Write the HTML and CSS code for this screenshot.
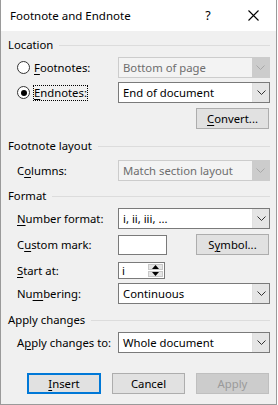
FILE: index.html
```html
<!DOCTYPE html>
<html>
<head>
<meta charset="utf-8">
<link rel="stylesheet" href="styles.css">
</head>
<body>
<div class="dialog">
  <div class="titlebar">
    <span class="title">Footnote and Endnote</span>
    <span class="help">?</span>
    <span class="close"><svg width="11" height="11" viewBox="0 0 11 11"><path d="M0.5 0.5 L10.5 10.5 M10.5 0.5 L0.5 10.5" stroke="#000" stroke-width="1.1" fill="none"/></svg></span>
  </div>
  <div class="body">
    <div class="head h-loc"><span>Location</span><div class="rule"></div></div>

    <div class="row r-foot">
      <div class="lab radio-lab"><span class="radio"></span><span><u>F</u>ootnotes:</span></div>
      <div class="select disabled"><span class="val">Bottom of page</span><span class="drop"><svg width="9" height="5" viewBox="0 0 9 5"><path d="M0.5 0.5 L4.5 4.5 L8.5 0.5" stroke="#a8a8a8" fill="none"/></svg></span></div>
    </div>
    <div class="row r-end">
      <div class="lab radio-lab"><span class="radio checked"></span><span class="focus"><u>E</u>ndnotes:</span></div>
      <div class="select"><span class="val">End of document</span><span class="drop"><svg width="9" height="5" viewBox="0 0 9 5"><path d="M0.5 0.5 L4.5 4.5 L8.5 0.5" stroke="#333" fill="none"/></svg></span></div>
    </div>
    <div class="row r-conv">
      <button class="btn"><u>C</u>onvert...</button>
    </div>

    <div class="head h-lay"><span>Footnote layout</span><div class="rule"></div></div>
    <div class="row r-cols">
      <div class="lab">C<u>o</u>lumns:</div>
      <div class="select disabled"><span class="val">Match section layout</span><span class="drop"><svg width="9" height="5" viewBox="0 0 9 5"><path d="M0.5 0.5 L4.5 4.5 L8.5 0.5" stroke="#a8a8a8" fill="none"/></svg></span></div>
    </div>

    <div class="head h-fmt"><span>Format</span><div class="rule"></div></div>
    <div class="row r-num">
      <div class="lab"><u>N</u>umber format:</div>
      <div class="select"><span class="val">i, ii, iii, ...</span><span class="drop"><svg width="9" height="5" viewBox="0 0 9 5"><path d="M0.5 0.5 L4.5 4.5 L8.5 0.5" stroke="#333" fill="none"/></svg></span></div>
    </div>
    <div class="row r-mark">
      <div class="lab">C<u>u</u>stom mark:</div>
      <div class="input"></div>
      <button class="btn sym">S<u>y</u>mbol...</button>
    </div>
    <div class="row r-start">
      <div class="lab"><u>S</u>tart at:</div>
      <div class="spin"><span class="val">i</span>
        <div class="spinbtns">
          <span class="sb"><svg width="7" height="4" viewBox="0 0 7 4"><path d="M0 4 L3.5 0 L7 4 Z" fill="#000"/></svg></span>
          <span class="sb"><svg width="7" height="4" viewBox="0 0 7 4"><path d="M0 0 L3.5 4 L7 0 Z" fill="#000"/></svg></span>
        </div>
      </div>
    </div>
    <div class="row r-numb">
      <div class="lab">Nu<u>m</u>bering:</div>
      <div class="select"><span class="val">Continuous</span><span class="drop"><svg width="9" height="5" viewBox="0 0 9 5"><path d="M0.5 0.5 L4.5 4.5 L8.5 0.5" stroke="#333" fill="none"/></svg></span></div>
    </div>

    <div class="head h-app"><span>Apply changes</span><div class="rule"></div></div>
    <div class="row r-app">
      <div class="lab">A<u>p</u>ply changes to:</div>
      <div class="select"><span class="val">Whole document</span><span class="drop"><svg width="9" height="5" viewBox="0 0 9 5"><path d="M0.5 0.5 L4.5 4.5 L8.5 0.5" stroke="#333" fill="none"/></svg></span></div>
    </div>

    <div class="buttons">
      <button class="btn default"><u>I</u>nsert</button>
      <button class="btn">Cancel</button>
      <button class="btn off">Apply</button>
    </div>
  </div>
</div>
</body>
</html>
```

FILE: styles.css
```css
* { box-sizing: border-box; }
html, body { margin: 0; padding: 0; background: #fff; }
body {
  font-family: "Segoe UI", "Noto Sans", "Open Sans", sans-serif;
  font-size: 11.3px;
  color: #000;
  width: 278px;
  height: 405px;
  overflow: hidden;
}
u { text-decoration: underline; text-underline-offset: 2px; text-decoration-thickness: 1px; }
.dialog {
  width: 277px;
  height: 405px;
  border: 1px solid #9a9a9a;
  border-top: none;
  background: #f0f0f0;
  display: flex;
  flex-direction: column;
}
.titlebar {
  height: 31px;
  background: #fff;
  display: flex;
  align-items: center;
  padding-left: 9px;
  flex: none;
}
.title { flex: 1; font-size: 11.5px; }
.help { width: 14px; font-size: 12.5px; margin-right: 33px; text-align: center; }
.close { width: 11px; height: 11px; margin-right: 17px; display: flex; }
.body {
  flex: 1;
  padding: 0 6px 0 7px;
  display: flex;
  flex-direction: column;
}
.head {
  height: 14px;
  display: flex;
  align-items: center;
  flex: none;
}
.head span { line-height: 14px; }
.head .rule { flex: 1; height: 1px; background: #dcdcdc; margin-left: 6px; margin-right: 0; }
.h-loc { margin-top: 7px; }
.h-lay { margin-top: 10px; }
.h-fmt { margin-top: 8px; }
.h-app { margin-top: 9px; }

.row {
  display: flex;
  align-items: center;
  padding-left: 9px;
  flex: none;
}
.lab { width: 101px; flex: none; white-space: nowrap; }
.radio-lab { display: flex; align-items: center; }
.radio {
  width: 13px; height: 13px;
  border: 1px solid #333;
  border-radius: 50%;
  background: #fff;
  margin-right: 4px;
  position: relative;
  flex: none;
}
.radio.checked::after {
  content: "";
  position: absolute;
  left: 2.5px; top: 2.5px;
  width: 6px; height: 6px;
  border-radius: 50%;
  background: #000;
}
.focus { outline: 1px dotted #000; outline-offset: 0; line-height: 14px; }

.select {
  width: 152px;
  height: 21px;
  border: 1px solid #7a7a7a;
  background: #fff;
  display: flex;
  align-items: stretch;
  flex: none;
}
.select .val { flex: 1; padding-left: 4px; display: flex; align-items: center; }
.select .drop {
  width: 17px;
  background: #e5e5e5;
  border-left: 1px solid #e0e0e0;
  display: flex; align-items: center; justify-content: center;
}
.select.disabled { border-color: #cccccc; background: #f3f3f3; color: #6d6d6d; }
.select.disabled .drop { background: #cccccc; border-left: none; }

.r-foot { margin-top: 5px; }
.r-end { margin-top: 4px; }
.r-conv { margin-top: 5px; justify-content: flex-end; padding-right: 1px; }
.r-cols { margin-top: 7px; }
.r-num { margin-top: 5px; }
.r-mark { margin-top: 5px; }
.r-start { margin-top: 7px; }
.r-numb { margin-top: 4px; }
.r-app { margin-top: 5px; }

.btn {
  font: inherit;
  color: #000;
  width: 73px;
  height: 21px;
  background: #e1e1e1;
  border: 1px solid #adadad;
  padding: 0;
  flex: none;
}
.sym { margin-left: 29px; }
.input {
  width: 49px; height: 20px;
  border: 1px solid #7a7a7a;
  background: #fff;
  flex: none;
}
.spin {
  width: 47px; height: 17px;
  border: 1px solid #7a7a7a;
  background: #fff;
  display: flex;
  flex: none;
}
.spin .val { flex: 1; padding-left: 3px; line-height: 15px; }
.spinbtns { width: 16px; display: flex; flex-direction: column; padding: 1px 1px 1px 0; gap: 1px; }
.sb {
  flex: 1;
  background: #e5e5e5;
  border: 1px solid #c8c8c8;
  display: flex; align-items: center; justify-content: center;
}
.buttons {
  margin-top: 20px;
  display: flex;
  justify-content: flex-end;
  gap: 11px;
  padding-right: 1px;
}
.btn.default { border: 2px solid #0078d7; width: 74px; }
.btn.off { background: #cccccc; border-color: #bfbfbf; color: #9a9a9a; }
```
